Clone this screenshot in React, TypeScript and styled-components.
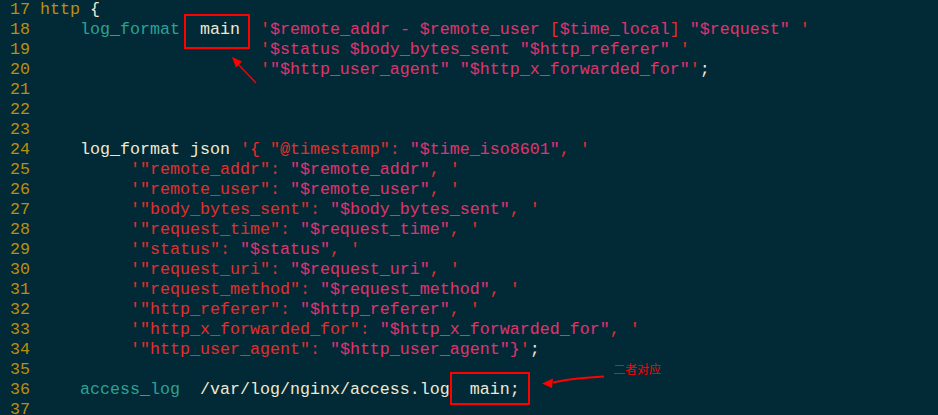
import React from "react";
import styled, { createGlobalStyle } from "styled-components";

const C = {
  bg: "#022a36",
  nr: "#b98f0b",
  teal: "#2aa198",
  cream: "#eee8d5",
  red: "#e22f2c",
  pink: "#e0336f",
  mark: "#ff0000",
};

type ColorKey = "nr" | "teal" | "cream" | "red" | "pink";
type Box = { l: number; r: number; t: number; b: number };
type Seg = { t: string; c?: ColorKey; box?: Box };
type LineData = { n: number; segs: Seg[] };

const Global = createGlobalStyle`
  html, body { margin: 0; padding: 0; background: ${C.bg}; }
`;

const Editor = styled.div`
  position: relative;
  width: 938px;
  height: 415px;
  overflow: hidden;
  background: ${C.bg};
  font-family: "Liberation Mono", "Courier New", monospace;
  font-size: 16.666px;
  line-height: 20px;
  color: ${C.cream};
`;

const Row = styled.div`
  display: flex;
  height: 20px;
  white-space: pre;
`;

const LineNo = styled.span`
  width: 30px;
  margin-right: 10px;
  text-align: right;
  color: ${C.nr};
  flex: none;
`;

const Code = styled.span`
  flex: 1;
`;

const Tok = styled.span<{ $c?: ColorKey }>`
  color: ${(p) => (p.$c ? C[p.$c] : "inherit")};
`;

const Boxed = styled.span<{ $c?: ColorKey; $box: Box }>`
  position: relative;
  display: inline-block;
  height: 20px;
  vertical-align: top;
  color: ${(p) => (p.$c ? C[p.$c] : "inherit")};
  &::after {
    content: "";
    position: absolute;
    left: ${(p) => -p.$box.l}px;
    right: ${(p) => -p.$box.r}px;
    top: ${(p) => -p.$box.t}px;
    bottom: ${(p) => -p.$box.b}px;
    border: 2px solid ${C.mark};
  }
`;

const Overlay = styled.svg`
  position: absolute;
  left: 0;
  top: 0;
  pointer-events: none;
`;

const Note = styled.span`
  position: absolute;
  left: 613px;
  top: 361px;
  font-family: "Noto Sans CJK SC", "Noto Sans", sans-serif;
  font-size: 12px;
  line-height: 16px;
  color: ${C.mark};
  white-space: nowrap;
`;

const kv = (key: string, val: string, last = false): Seg[] => [
  { t: "         " },
  { t: `'"${key}": `, c: "red" },
  { t: `"${val}"${last ? "}" : ""}`, c: "pink" },
  ...(last
    ? ([
        { t: "'", c: "red" },
        { t: ";", c: "cream" },
      ] as Seg[])
    : ([{ t: ", '", c: "red" }] as Seg[])),
];

const lines: LineData[] = [
  { n: 17, segs: [{ t: "http", c: "nr" }, { t: " {", c: "cream" }] },
  {
    n: 18,
    segs: [
      { t: "    " },
      { t: "log_format", c: "teal" },
      { t: "  " },
      { t: "main", c: "cream", box: { l: 16, r: 10, t: 6, b: 9 } },
      { t: "  " },
      { t: "'", c: "red" },
      { t: "$remote_addr - $remote_user ", c: "pink" },
      { t: "[", c: "red" },
      { t: "$time_local", c: "pink" },
      { t: "]", c: "red" },
      { t: ' "$request" ', c: "pink" },
      { t: "'", c: "red" },
    ],
  },
  {
    n: 19,
    segs: [
      { t: "                      " },
      { t: "'", c: "red" },
      { t: '$status $body_bytes_sent "$http_referer" ', c: "pink" },
      { t: "'", c: "red" },
    ],
  },
  {
    n: 20,
    segs: [
      { t: "                      " },
      { t: "'", c: "red" },
      { t: '"$http_user_agent" "$http_x_forwarded_for"', c: "pink" },
      { t: "'", c: "red" },
      { t: ";", c: "cream" },
    ],
  },
  { n: 21, segs: [] },
  { n: 22, segs: [] },
  { n: 23, segs: [] },
  {
    n: 24,
    segs: [
      { t: "    log_format json ", c: "cream" },
      { t: `'{ "@timestamp": `, c: "red" },
      { t: '"$time_iso8601"', c: "pink" },
      { t: ", '", c: "red" },
    ],
  },
  { n: 25, segs: kv("remote_addr", "$remote_addr") },
  { n: 26, segs: kv("remote_user", "$remote_user") },
  { n: 27, segs: kv("body_bytes_sent", "$body_bytes_sent") },
  { n: 28, segs: kv("request_time", "$request_time") },
  { n: 29, segs: kv("status", "$status") },
  { n: 30, segs: kv("request_uri", "$request_uri") },
  { n: 31, segs: kv("request_method", "$request_method") },
  { n: 32, segs: kv("http_referer", "$http_referer") },
  { n: 33, segs: kv("http_x_forwarded_for", "$http_x_forwarded_for") },
  { n: 34, segs: kv("http_user_agent", "$http_user_agent", true) },
  { n: 35, segs: [] },
  {
    n: 36,
    segs: [
      { t: "    " },
      { t: "access_log", c: "teal" },
      { t: "  " },
      { t: "/var/log/nginx/access.log", c: "cream" },
      { t: "  " },
      { t: "main;", c: "cream", box: { l: 20, r: 10, t: 8, b: 5 } },
    ],
  },
  { n: 37, segs: [] },
];

export default function App() {
  return (
    <>
      <Global />
      <Editor>
        {lines.map((ln) => (
          <Row key={ln.n}>
            <LineNo>{ln.n}</LineNo>
            <Code>
              {ln.segs.map((s, i) =>
                s.box ? (
                  <Boxed key={i} $c={s.c} $box={s.box}>
                    {s.t}
                  </Boxed>
                ) : (
                  <Tok key={i} $c={s.c}>
                    {s.t}
                  </Tok>
                )
              )}
            </Code>
          </Row>
        ))}
        <Overlay width={938} height={415} viewBox="0 0 938 415">
          <line x1={256} y1={83} x2={238} y2={64} stroke={C.mark} strokeWidth={1.3} />
          <polygon points="232,57 242,61.5 236,67.5" fill={C.mark} />
          <polyline
            points="604,376.5 590,377.5 578,378.5 566,380 553,382.5"
            fill="none"
            stroke={C.mark}
            strokeWidth={2}
          />
          <polygon points="542,383.5 553,378.5 552,388" fill={C.mark} />
        </Overlay>
        <Note>二者对应</Note>
      </Editor>
    </>
  );
}
